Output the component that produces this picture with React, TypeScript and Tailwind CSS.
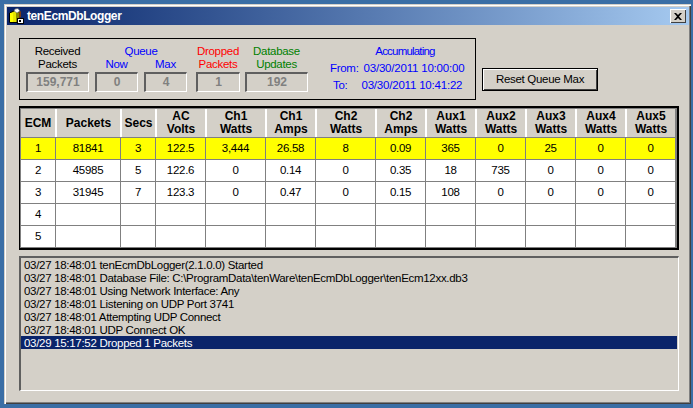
const font = { fontFamily: '"Liberation Sans", Arial, sans-serif' };

function Field({ value, w }: { value: string; w: string }) {
  return (
    <div className={`${w} h-[20px] mt-[1px] flex items-center justify-center border-t-2 border-l-2 border-r border-b border-t-[#5f5f5f] border-l-[#5f5f5f] border-r-white border-b-white text-[12px] tracking-normal font-bold text-[#808080]`}>
      {value}
    </div>
  );
}

const headers = [
  ['ECM'], ['Packets'], ['Secs'], ['AC', 'Volts'], ['Ch1', 'Watts'], ['Ch1', 'Amps'], ['Ch2', 'Watts'], ['Ch2', 'Amps'],
  ['Aux1', 'Watts'], ['Aux2', 'Watts'], ['Aux3', 'Watts'], ['Aux4', 'Watts'], ['Aux5', 'Watts'],
];
const widths = ['w-[34px]', 'w-[65px]', 'w-[35px]', 'w-[50px]', 'w-[60px]', 'w-[50px]', 'w-[60px]', 'w-[50px]', 'w-[50px]', 'w-[50px]', 'w-[50px]', 'w-[50px]', 'w-[50px]'];
const rows = [
  ['1', '81841', '3', '122.5', '3,444', '26.58', '8', '0.09', '365', '0', '25', '0', '0'],
  ['2', '45985', '5', '122.6', '0', '0.14', '0', '0.35', '18', '735', '0', '0', '0'],
  ['3', '31945', '7', '123.3', '0', '0.47', '0', '0.15', '108', '0', '0', '0', '0'],
  ['4', '', '', '', '', '', '', '', '', '', '', '', ''],
  ['5', '', '', '', '', '', '', '', '', '', '', '', ''],
];
const log = [
  '03/27 18:48:01 tenEcmDbLogger(2.1.0.0) Started',
  '03/27 18:48:01 Database File: C:\\ProgramData\\tenWare\\tenEcmDbLogger\\tenEcm12xx.db3',
  '03/27 18:48:01 Using Network Interface: Any',
  '03/27 18:48:01 Listening on UDP Port 3741',
  '03/27 18:48:01 Attempting UDP Connect',
  '03/27 18:48:01 UDP Connect OK',
];

export default function App() {
  return (
    <div className="w-[693px] h-[408px] bg-[#3a6ea5] pt-[4px] pl-[4px] overflow-hidden text-[11.5px] tracking-[-0.3px] leading-[13px] text-black" style={font}>
      <div className="w-[687px] h-[400px] bg-[#d4d0c8] pt-[3px] pl-[3px] pr-[2px] shadow-[inset_1px_1px_0_#d4d0c8,inset_2px_2px_0_#fff,inset_-1px_-1px_0_#404040,inset_-2px_-2px_0_#808080]">
        <div className="h-[18px] flex items-center justify-between pl-[1px] pr-[3px] bg-gradient-to-r from-[#0a246a] to-[#a6caf0]">
          <div className="flex items-center gap-[3px]">
            <svg width="16" height="16" viewBox="0 0 16 16">
              <path d="M1.5 5 L7 2.5 L11 4 L11 14.5 L1.5 14.5Z" fill="#e6e600" stroke="#000" />
              <path d="M7 1 L10 0.5 L12 3 L9 5 L6 3Z" fill="#fff" stroke="#666" strokeWidth="0.7" />
              <rect x="2" y="5" width="3" height="9" fill="#ffff00" />
              <rect x="8" y="5" width="3" height="9" fill="#8a8a00" />
              <path d="M11 4 L13 3 L13 9 L11 10Z" fill="#7a3a10" />
              <rect x="9.5" y="10.5" width="6" height="5" fill="#fff" stroke="#000" />
              <rect x="11" y="12" width="2" height="2" fill="#000" />
            </svg>
            <span className="text-white text-[12px] tracking-[-0.4px] font-bold">tenEcmDbLogger</span>
          </div>
          <div className="w-[16px] h-[14px] bg-[#d4d0c8] shadow-[inset_1px_1px_0_#fff,inset_-1px_-1px_0_#404040] flex items-center justify-center">
            <svg width="8" height="7" viewBox="0 0 8 7"><path d="M0 0 L2 0 L4 2 L6 0 L8 0 L5 3.5 L8 7 L6 7 L4 5 L2 7 L0 7 L3 3.5Z" fill="#000" /></svg>
          </div>
        </div>

        <div className="pl-[12px] pt-[13px] flex items-start gap-[6px]">
          <div className="w-[457px] h-[62px] border border-black flex pl-[6px] pt-[6px]">
            <div className="w-[63px] flex flex-col items-center">
              <div className="text-center">Received<br />Packets</div>
              <Field value="159,771" w="w-[63px]" />
            </div>
            <div className="w-[92px] ml-[6px] flex flex-col text-[#0000ff]">
              <div className="text-center">Queue</div>
              <div className="flex gap-[6px]">
                <div className="w-[43px] flex flex-col items-center"><span>Now</span><Field value="0" w="w-[43px]" /></div>
                <div className="w-[43px] flex flex-col items-center"><span>Max</span><Field value="4" w="w-[43px]" /></div>
              </div>
            </div>
            <div className="w-[44px] ml-[9px] flex flex-col items-center text-[#ff0000]">
              <div className="text-center">Dropped<br />Packets</div>
              <Field value="1" w="w-[44px]" />
            </div>
            <div className="w-[63px] ml-[5px] flex flex-col items-center text-[#008000]">
              <div className="text-center">Database<br />Updates</div>
              <Field value="192" w="w-[63px]" />
            </div>
            <div className="ml-[22px] text-[#0000ff] w-[136px] whitespace-nowrap">
              <div className="text-center pl-[14px] tracking-[-0.8px]">Accumulating</div>
              <div className="flex gap-[5px] mt-[4px]"><span>From:</span><span className="tracking-[-0.2px]">03/30/2011 10:00:00</span></div>
              <div className="flex gap-[14px] mt-[4px] pl-[3px]"><span>To:</span><span className="tracking-[-0.2px]">03/30/2011 10:41:22</span></div>
            </div>
          </div>
          <div className="mt-[30px] w-[116px] h-[23px] border border-black bg-[#d4d0c8] flex items-center justify-center shadow-[inset_1px_1px_0_#fff,inset_-1px_-1px_0_#404040]">Reset Queue Max</div>
        </div>

        <div className="ml-[12px] mt-[6px] w-[660px] h-[144px] border-t-2 border-l border-r-2 border-b-2 border-black bg-[#808080] pl-px pt-px">
          <div className="flex h-[28px] bg-[#d4d0c8] font-bold tracking-normal text-[12px] mb-px w-[654px]">
            {headers.map((h, i) => (
              <div key={i} className={`${widths[i]} border-l-2 border-white first:border-l-0 flex flex-col items-center justify-center text-center`}>
                {h.map((t) => <div key={t}>{t}</div>)}
              </div>
            ))}
          </div>
          {rows.map((r, ri) => (
            <div key={ri} className={`flex h-[21px] mb-px last:mb-0 w-[654px] ${ri === 0 ? 'bg-[#ffff00]' : 'bg-white'}`}>
              {r.map((c, i) => (
                <div key={i} className={`${widths[i]} border-l border-[#808080] first:border-l-0 flex items-center justify-center`}>{c}</div>
              ))}
            </div>
          ))}
        </div>

        <div className="ml-[12px] mt-[6px] w-[660px] h-[135px] border-t-2 border-l-2 border-r border-b border-t-[#5f5f5f] border-l-[#5f5f5f] border-r-white border-b-white pr-px">
          {log.map((l) => <div key={l} className="h-[13px] pl-[3px] leading-[14px] whitespace-nowrap">{l}</div>)}
          <div className="h-[13px] pl-[3px] leading-[14px] bg-[#0a246a] text-white">03/29 15:17:52 Dropped 1 Packets</div>
        </div>
      </div>
    </div>
  );
}
